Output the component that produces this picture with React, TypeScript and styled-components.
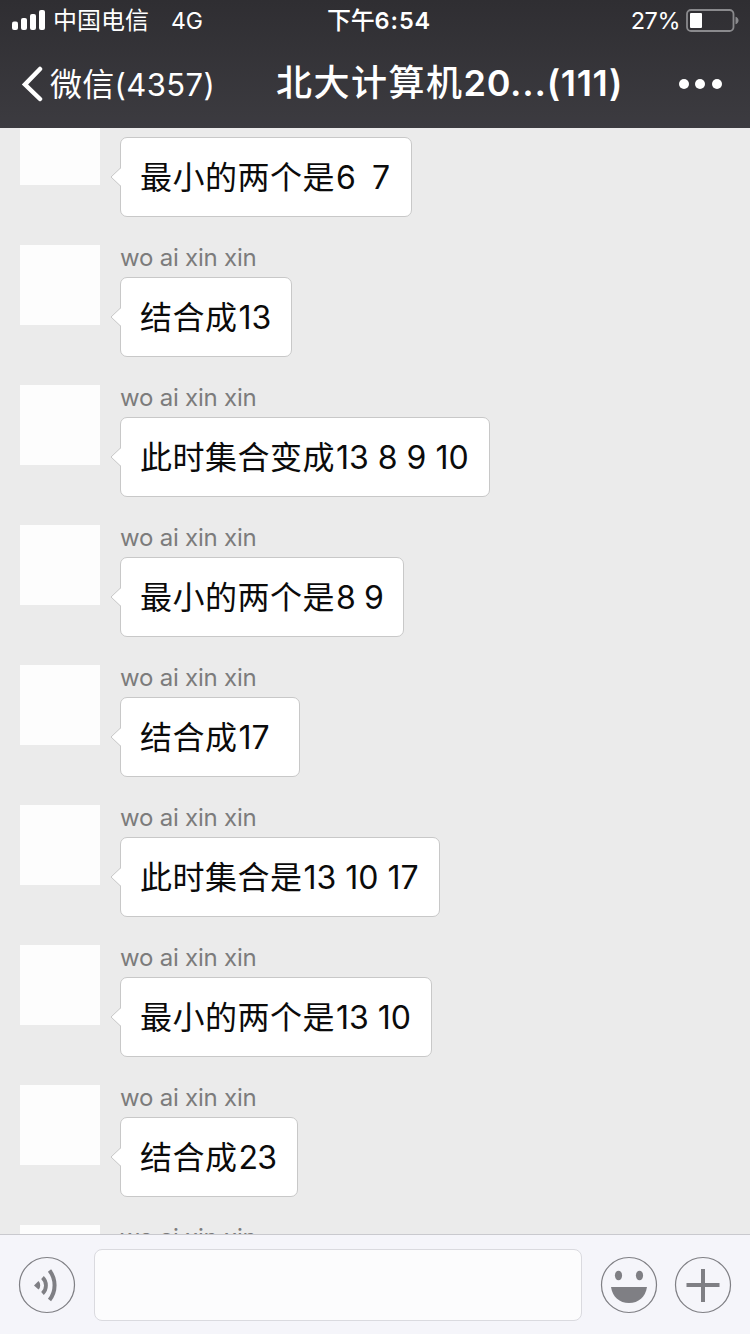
import React from "react";
import styled, { createGlobalStyle } from "styled-components";

const GlobalStyle = createGlobalStyle`
  * { box-sizing: border-box; }
  html, body { margin: 0; padding: 0; }
  body { background: #ebebeb; font-family: Inter, "Noto Sans CJK SC", sans-serif; }
`;

const Screen = styled.div`
  display: flex;
  flex-direction: column;
  width: 750px;
  height: 1334px;
  overflow: hidden;
  background: #ebebeb;
`;

const Header = styled.header`
  flex: none;
  height: 128px;
  color: #fff;
  background: linear-gradient(#2f2e32, #3c3b40);
`;

const StatusBar = styled.div`
  display: flex;
  align-items: center;
  height: 40px;
  padding: 0 10px 0 12px;
`;

const NavBar = styled.div`
  display: flex;
  align-items: center;
  height: 88px;
  padding: 0 28px 0 21px;
`;

const Slot = styled.div<{ $width: number }>`
  display: flex;
  flex: none;
  align-items: center;
  width: ${(p) => p.$width}px;
`;

const Run = styled.span<{ $size: number; $track?: number; $weight?: number }>`
  font-size: ${(p) => p.$size}px;
  letter-spacing: ${(p) => p.$track ?? 0}px;
  font-weight: ${(p) => p.$weight ?? 400};
`;

const Digits = styled(Run)`
  margin-left: 1px;
`;

const Label = styled.div<{ $left?: number; $top?: number }>`
  margin-left: ${(p) => p.$left ?? 0}px;
  padding-top: ${(p) => p.$top ?? 0}px;
  line-height: 40px;
  white-space: pre;
`;

const StatusLabel = styled(Label)`
  padding-top: 4px;
`;

const Spacer = styled.div`
  flex: 1;
`;

const Chat = styled.main`
  flex: 1;
  min-height: 0;
  overflow: hidden;
`;

const Message = styled.article<{ $clipped?: boolean }>`
  display: flex;
  align-items: flex-start;
  height: 140px;
  padding-left: 20px;
  margin-top: ${(p) => (p.$clipped ? -23 : 0)}px;
`;

const Avatar = styled.div`
  flex: none;
  width: 80px;
  height: 80px;
  background: #fdfdfd;
`;

const Body = styled.div`
  margin-left: 20px;
`;

const Sender = styled.div`
  height: 32px;
  line-height: 26px;
  font-size: 24px;
  letter-spacing: -0.22px;
  color: #7c7c7c;
  white-space: pre;
`;

const Bubble = styled.div<{ $width: number }>`
  position: relative;
  width: ${(p) => p.$width}px;
  height: 80px;
  padding-left: 19px;
  line-height: 79px;
  white-space: pre;
  color: #0b0b0b;
  background: #fff;
  border: 1px solid #c8c8c8;
  border-radius: 7px;
`;

const Tail = styled.svg`
  position: absolute;
  left: -11px;
  top: 28px;
`;

const InputBar = styled.footer`
  display: flex;
  flex: none;
  align-items: center;
  height: 100px;
  padding: 0 18px 0 18px;
  background: #f5f5fa;
  border-top: 1px solid #c9c9ce;
`;

const Field = styled.div`
  width: 488px;
  height: 72px;
  margin: 0 18px;
  background: #fcfcfd;
  border: 1px solid #dadadf;
  border-radius: 8px;
`;

const IconButton = styled.button<{ $gap?: number }>`
  display: block;
  flex: none;
  width: 58px;
  height: 58px;
  margin: 0 0 0 ${(p) => p.$gap ?? 0}px;
  padding: 0;
  border: 0;
  background: none;
`;

interface Entry {
  sender?: string;
  han?: string;
  digits?: string;
  width?: number;
  track?: number;
}

const name = "wo ai xin xin";

const entries: Entry[] = [
  { han: "最小的两个是", digits: "6  7", width: 292, track: -0.6 },
  { sender: name, han: "结合成", digits: "13", width: 172 },
  { sender: name, han: "此时集合变成", digits: "13 8 9 10", width: 370 },
  { sender: name, han: "最小的两个是", digits: "8 9", width: 284, track: -0.4 },
  { sender: name, han: "结合成", digits: "17", width: 180 },
  { sender: name, han: "此时集合是", digits: "13 10 17", width: 320 },
  { sender: name, han: "最小的两个是", digits: "13 10", width: 312 },
  { sender: name, han: "结合成", digits: "23", width: 178, track: -0.8 },
  { sender: name },
];

function Signal() {
  return (
    <svg width="34" height="22" viewBox="0 0 34 22" fill="#fff">
      <rect x="0" y="12.5" width="6" height="8.5" rx="2" />
      <rect x="9" y="9" width="6" height="12" rx="2" />
      <rect x="18" y="5" width="6" height="16" rx="2" />
      <rect x="27" y="1" width="6" height="20" rx="2" />
    </svg>
  );
}

function Battery() {
  return (
    <svg width="54" height="24" viewBox="0 0 54 24">
      <rect x="1" y="2" width="46.5" height="21" rx="4" fill="none" stroke="#8a8a8d" strokeWidth="1.8" />
      <rect x="4" y="5" width="12" height="15" rx="1" fill="#fff" />
      <path d="M49.5 8.7c2 .6 3 2 3 3.8s-1 3.2-3 3.8z" fill="#8a8a8d" />
    </svg>
  );
}

function Circle() {
  return <circle cx="29" cy="29" r="27.5" fill="none" stroke="#7f7f84" strokeWidth="1.2" />;
}

export default function App() {
  return (
    <>
      <GlobalStyle />
      <Screen>
        <Header>
          <StatusBar>
            <Slot $width={315}>
              <Signal />
              <StatusLabel $left={7}>
                <Run $size={24}>中国电信</Run>
              </StatusLabel>
              <StatusLabel $left={22}>
                <Run $size={23}>4G</Run>
              </StatusLabel>
            </Slot>
            <StatusLabel>
              <Run $size={24} $weight={500} $track={-0.2}>下午</Run>
              <Run $size={23.5} $weight={600} $track={0.9}>6:54</Run>
            </StatusLabel>
            <Spacer />
            <StatusLabel>
              <Run $size={23.5} $track={-0.5}>27%</Run>
            </StatusLabel>
            <Label $left={6} />
            <Battery />
          </StatusBar>
          <NavBar>
            <Slot $width={255}>
              <svg width="24" height="36" viewBox="0 0 24 36">
                <path d="M19 3 4 18.5 19 33" fill="none" stroke="#fff" strokeWidth="4.5" strokeLinecap="round" />
              </svg>
              <Label $left={5} $top={7}>
                <Run $size={32} $track={0.3}>微信</Run>
                <Run $size={31} $track={0.4}>(4357)</Run>
              </Label>
            </Slot>
            <Label $top={5}>
              <Run $size={36} $weight={500} $track={1.5}>北大计算机</Run>
              <Run $size={36} $weight={600} $track={0.7}>20...(111)</Run>
            </Label>
            <Spacer />
            <svg width="44" height="12" viewBox="0 0 44 12" fill="#fff">
              <circle cx="6" cy="6" r="5" />
              <circle cx="22" cy="6" r="5" />
              <circle cx="39" cy="6" r="5" />
            </svg>
          </NavBar>
        </Header>
        <Chat>
          {entries.map((e, i) => (
            <Message key={i} $clipped={i === 0}>
              <Avatar />
              <Body>
                <Sender>{e.sender}</Sender>
                {e.han && (
                  <Bubble $width={e.width ?? 0}>
                    <Tail width="12" height="22" viewBox="0 0 12 22">
                      <path d="M12 1 1 11l11 10z" fill="#fff" />
                      <path d="M11 1.5 1 11l10 9.5" fill="none" stroke="#c8c8c8" />
                    </Tail>
                    <Run $size={32} $track={0.5}>{e.han}</Run>
                    <Digits $size={32} $track={e.track}>{e.digits}</Digits>
                  </Bubble>
                )}
              </Body>
            </Message>
          ))}
        </Chat>
        <InputBar>
          <IconButton aria-label="voice">
            <svg width="58" height="58" viewBox="0 0 58 58">
              <Circle />
              <path d="M16 29.5 20.5 25a6 6 0 0 1 0 8.5z" fill="#7f7f84" />
              <path d="M24.5 21.5a11 11 0 0 1 0 16" fill="none" stroke="#7f7f84" strokeWidth="3.8" />
              <path d="M31.5 14.5a24 24 0 0 1 0 29.5" fill="none" stroke="#7f7f84" strokeWidth="4" />
            </svg>
          </IconButton>
          <Field />
          <IconButton aria-label="emoji">
            <svg width="58" height="58" viewBox="0 0 58 58">
              <Circle />
              <ellipse cx="18.5" cy="19.5" rx="3.6" ry="4.8" fill="#7f7f84" />
              <ellipse cx="39.5" cy="19.5" rx="3.6" ry="4.8" fill="#7f7f84" />
              <path d="M11 31h36c-1.5 10-8.5 16-18 16S12.5 41 11 31z" fill="#7f7f84" />
            </svg>
          </IconButton>
          <IconButton aria-label="more" $gap={16}>
            <svg width="58" height="58" viewBox="0 0 58 58">
              <Circle />
              <path d="M29 13v33M12.5 29h33" fill="none" stroke="#7f7f84" strokeWidth="4" />
            </svg>
          </IconButton>
        </InputBar>
      </Screen>
    </>
  );
}
